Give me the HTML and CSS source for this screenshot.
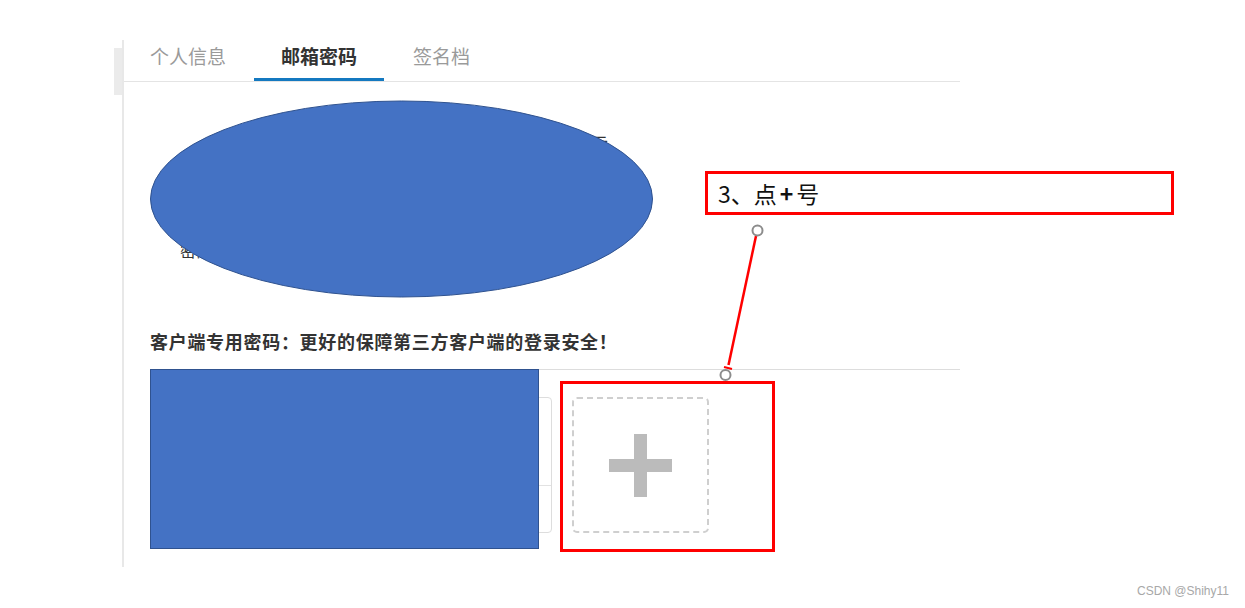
FILE: index.html
```html
<!DOCTYPE html>
<html lang="zh-CN">
<head>
<meta charset="utf-8">
<title>邮箱密码</title>
<link rel="stylesheet" href="styles.css">
</head>
<body>
<div class="page">
  <div class="sidebar"><div class="side-active"></div></div>
  <div class="panel">
    <div class="tabs">
      <div class="tab first">个人信息</div>
      <div class="tab active">邮箱密码</div>
      <div class="tab last">签名档</div>
    </div>
    <div class="form">
      <div class="row row1">当前登录邮箱帐号与绑定的手机号码信息如下所示</div>
      <div class="row row2">密码强度：中，建议定期修改</div>
    </div>
    <div class="client">
      <h3 class="client-title">客户端专用密码：更好的保障第三方客户端的登录安全！</h3>
      <div class="cards">
        <div class="card"><div class="card-top"></div></div>
        <div class="card"><div class="card-top"></div></div>
        <div class="add-box">
          <span class="plus-h"></span>
          <span class="plus-v"></span>
        </div>
      </div>
    </div>
  </div>
</div>

<svg class="mask-ellipse" width="505" height="199" viewBox="0 0 505 199">
  <ellipse cx="252.5" cy="99" rx="251" ry="98" fill="#4472c4" stroke="#2f528f" stroke-width="1"/>
</svg>
<div class="mask-rect"></div>

<div class="callout">3、点<span class="callout-plus">+</span>号</div>
<div class="highlight"></div>
<svg class="connector" width="1245" height="608" viewBox="0 0 1245 608">
  <line x1="756" y1="236" x2="728.5" y2="365" stroke="#ff0000" stroke-width="2.5"/>
  <path d="M724 367 L732 369" stroke="#ff0000" stroke-width="2"/>
  <circle cx="757.5" cy="230.5" r="5" fill="#fff" stroke="#8c8c8c" stroke-width="2"/>
  <circle cx="725.5" cy="375" r="5" fill="#fff" stroke="#8c8c8c" stroke-width="2"/>
</svg>

<div class="watermark">CSDN @Shihy11</div>
</body>
</html>
```

FILE: styles.css
```css
html, body {
  margin: 0;
  padding: 0;
  background: #ffffff;
}

body {
  width: 1245px;
  height: 608px;
  position: relative;
  overflow: hidden;
  font-family: "Noto Sans CJK SC", "Noto Sans", sans-serif;
}

.page {
  display: flex;
  padding-top: 40px;
}

.sidebar {
  width: 122px;
  flex: none;
}

.side-active {
  margin-left: 114px;
  margin-top: 8px;
  width: 8px;
  height: 47px;
  background: #ebebeb;
}

.panel {
  width: 836px;
  height: 527px;
  border-left: 2px solid #e8e8e8;
}

.tabs {
  display: flex;
  border-bottom: 1px solid #e4e4e4;
}

.tab {
  padding: 0 28px;
  height: 38px;
  line-height: 32px;
  font-size: 19px;
  color: #9a9a9a;
  border-bottom: 3px solid transparent;
}

.tab.first {
  padding-left: 26px;
}

.tab.active {
  padding: 0 27px;
  color: #333333;
  font-weight: 700;
  border-bottom-color: #1479c0;
}

.tab.last {
  padding-left: 29px;
}

.form {
  height: 247px;
  box-sizing: border-box;
  padding-top: 49px;
  font-size: 16px;
  color: #333333;
}

.row {
  line-height: 22px;
}

.row1 {
  padding-left: 132px;
}

.row2 {
  margin-top: 86px;
  padding-left: 56px;
}

.client {
  margin-left: 26px;
}

.client-title {
  margin: 0;
  font-size: 18px;
  letter-spacing: 0.7px;
  line-height: 24px;
  font-weight: 700;
  color: #333333;
  padding-bottom: 16px;
  border-bottom: 1px solid #dddddd;
}

.cards {
  display: flex;
  gap: 20px;
  padding-top: 27px;
  padding-left: 110px;
}

.card {
  width: 136px;
  height: 136px;
  box-sizing: border-box;
  border: 1px solid #dddddd;
  border-radius: 4px;
}

.card-top {
  height: 87px;
  border-bottom: 1px solid #e2e2e2;
}

.add-box {
  width: 137px;
  height: 136px;
  box-sizing: border-box;
  border: 2px dashed #cfcfcf;
  border-radius: 5px;
  position: relative;
  display: flex;
  align-items: center;
  justify-content: center;
}

.plus-h {
  position: absolute;
  width: 63px;
  height: 13px;
  background: #bbbbbb;
}

.plus-v {
  position: absolute;
  width: 13px;
  height: 63px;
  background: #bbbbbb;
}

.mask-ellipse {
  position: absolute;
  left: 149px;
  top: 100px;
}

.mask-rect {
  position: absolute;
  left: 150px;
  top: 369px;
  width: 389px;
  height: 180px;
  box-sizing: border-box;
  background: #4472c4;
  border: 1px solid #2f528f;
}

.callout {
  position: absolute;
  left: 705px;
  top: 171px;
  width: 469px;
  height: 44px;
  box-sizing: border-box;
  border: 3px solid #ff0000;
  padding-left: 10px;
  font-size: 23px;
  line-height: 38px;
  color: #111111;
  background: #ffffff;
}

.callout-plus {
  font-weight: 700;
  margin: 0 3px;
}

.highlight {
  position: absolute;
  left: 560px;
  top: 381px;
  width: 215px;
  height: 171px;
  box-sizing: border-box;
  border: 3px solid #ff0000;
}

.connector {
  position: absolute;
  left: 0;
  top: 0;
  pointer-events: none;
}

.watermark {
  position: absolute;
  right: 16px;
  top: 583px;
  font-family: "Liberation Sans", "Noto Sans", sans-serif;
  font-size: 12px;
  line-height: 16px;
  color: #a8a8a8;
}
```
